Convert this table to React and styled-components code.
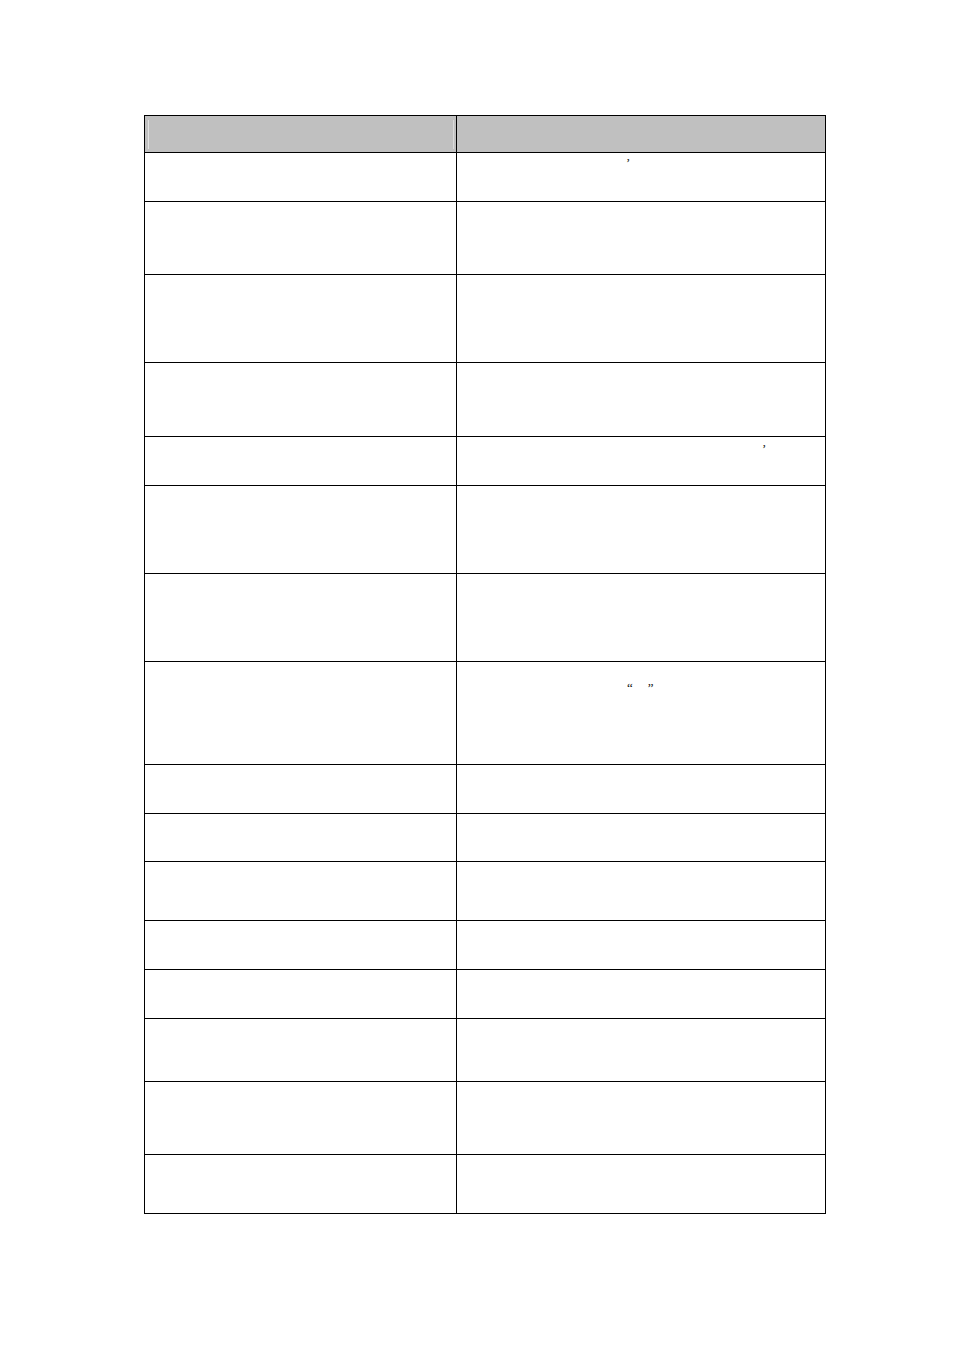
import React from "react";
import styled, { createGlobalStyle } from "styled-components";

const GlobalStyle = createGlobalStyle`
  html, body {
    margin: 0;
    padding: 0;
    background: #ffffff;
  }
  body {
    font-family: "Liberation Serif", "Noto Sans CJK SC", serif;
  }
`;

// row heights, measured border to border
const rows = [
  { h: 49, right: [{ x: 169, y: 3, t: "\u2019" }] },
  { h: 73 },
  { h: 88 },
  { h: 74 },
  { h: 49, right: [{ x: 305, y: 5, t: "\u2019" }] },
  { h: 88 },
  { h: 88 },
  {
    h: 103,
    right: [
      { x: 170, y: 19, t: "\u201C" },
      { x: 15, y: 19, t: "\u201D" },
    ],
  },
  { h: 49 },
  { h: 48 },
  { h: 59 },
  { h: 49 },
  { h: 49 },
  { h: 63 },
  { h: 73 },
  { h: 59 },
];

const App = () => {
  return (
    <>
      <GlobalStyle />
      <Page>
        <Table>
          <HeadCell>
            <HeadInner $bevel />
          </HeadCell>
          <HeadCell>
            <HeadInner />
          </HeadCell>
          {rows.map((row, i) => (
            <React.Fragment key={i}>
              <Cell $h={row.h} />
              <Cell $h={row.h}>
                {row.right && (
                  <Line>
                    {row.right.map((m, j) => (
                      <Mark key={j} $x={m.x} $y={m.y}>
                        {m.t}
                      </Mark>
                    ))}
                  </Line>
                )}
              </Cell>
            </React.Fragment>
          ))}
        </Table>
      </Page>
    </>
  );
};

export default App;

const Page = styled.div`
  width: 954px;
  min-height: 1349px;
  padding: 115px 0 0 144px;
  box-sizing: border-box;
`;

const Table = styled.div`
  display: grid;
  grid-template-columns: 312px 369px;
  width: max-content;
  border-top: 1px solid #000;
  border-left: 1px solid #000;
`;

const HeadCell = styled.div`
  height: 37px;
  box-sizing: border-box;
  background: #c0c0c0;
  border-right: 1px solid #000;
  border-bottom: 1px solid #000;
  padding: 4px 2px 3px 3px;
  display: flex;
`;

const HeadInner = styled.div`
  flex: 1;
  border-left: 1px solid ${(p) => (p.$bevel ? "#e2e2e2" : "transparent")};
  border-right: 1px solid ${(p) => (p.$bevel ? "#dadada" : "transparent")};
`;

const Cell = styled.div`
  height: ${(p) => p.$h}px;
  box-sizing: border-box;
  border-right: 1px solid #000;
  border-bottom: 1px solid #000;
  background: #fff;
`;

const Line = styled.div`
  display: flex;
  align-items: flex-start;
  font-size: 13px;
  line-height: 14px;
  color: #111;
`;

const Mark = styled.span`
  display: inline-block;
  margin-left: ${(p) => p.$x}px;
  margin-top: ${(p) => p.$y}px;
`;
